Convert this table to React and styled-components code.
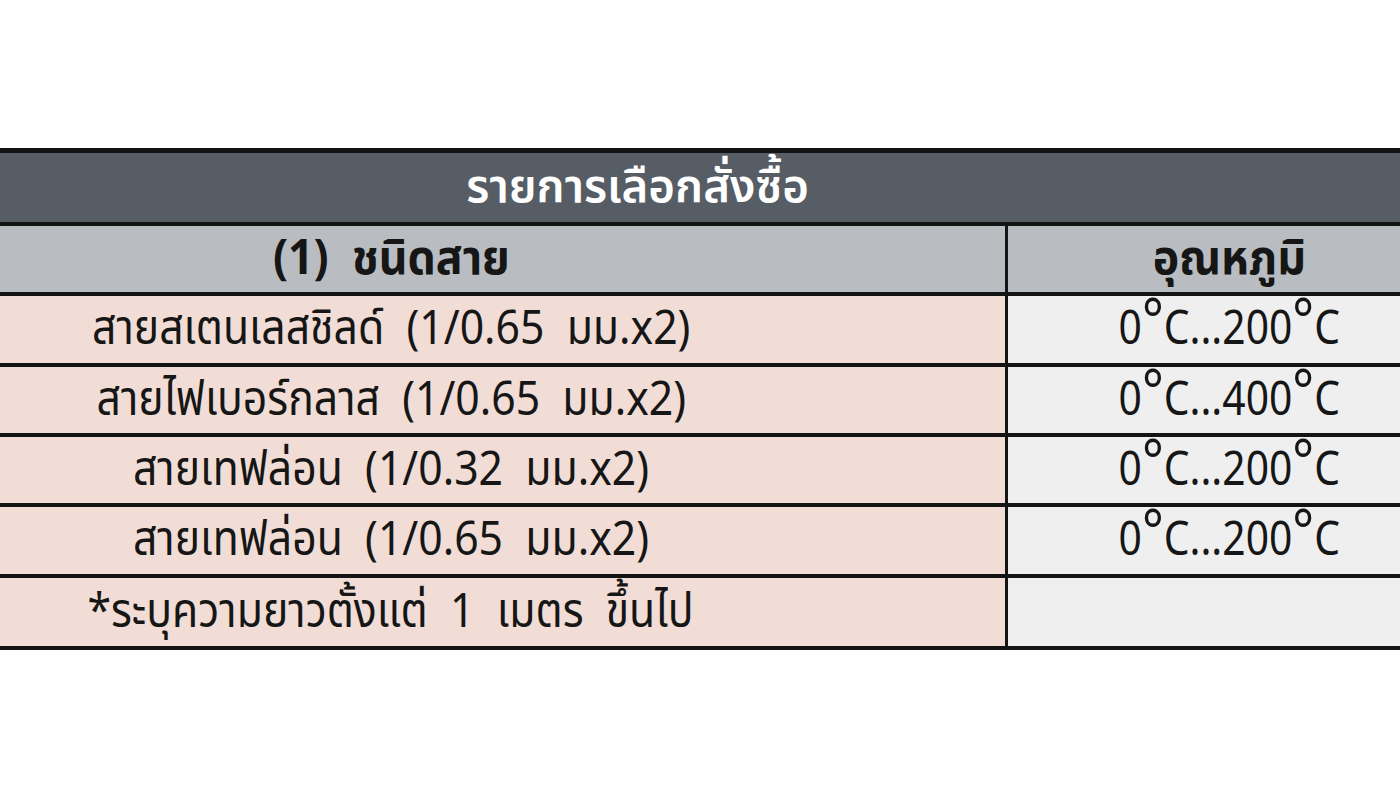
import React from "react";
import styled, { createGlobalStyle } from "styled-components";

const Global = createGlobalStyle`
  html, body { margin: 0; padding: 0; background: #ffffff; }
  body { font-family: "Noto Sans Thai", "Noto Sans", "DejaVu Sans", sans-serif; }
`;

const Page = styled.div`
  width: 1400px;
  height: 800px;
  padding-top: 148px;
  box-sizing: border-box;
  overflow: hidden;
`;

const Table = styled.div`
  display: grid;
  grid-template-columns: 1005px 1fr;
  grid-template-rows: 69px 66px 67px 66px 66px 67px 68px;
  column-gap: 3px;
  row-gap: 4px;
  padding: 5px 0 4px;
  background: #141414;
`;

const Title = styled.div`
  grid-column: 1 / -1;
  background: #565d64;
  display: flex;
  align-items: center;
  justify-content: center;
  padding-right: 124px;
  color: #ffffff;
  font-weight: 600;
  font-size: 47px;
  white-space: nowrap;
`;

const Cell = styled.div`
  display: flex;
  align-items: center;
  justify-content: center;
  background: ${(p) => p.$bg};
  padding: ${(p) => (p.$side === "left" ? "0 223px 0 0" : "0 0 0 50px")};
  color: #161616;
  font-size: 48px;
  font-weight: ${(p) => (p.$head ? 700 : 400)};
  white-space: pre;
`;

const Squeeze = styled.span`
  display: inline-block;
  transform: scaleX(${(p) => p.$sx || 0.89});
`;

const Deg = styled.span`
  font-size: 1.25em;
  line-height: 0;
  vertical-align: 3px;
`;

const rows = [
  ["สายสเตนเลสชิลด์  (1/0.65  มม.x2)", "200"],
  ["สายไฟเบอร์กลาส  (1/0.65  มม.x2)", "400"],
  ["สายเทฟล่อน  (1/0.32  มม.x2)", "200"],
  ["สายเทฟล่อน  (1/0.65  มม.x2)", "200"],
];

const Temp = ({ max }) => (
  <Squeeze $sx={0.85}>
    0<Deg>°</Deg>C...{max}
    <Deg>°</Deg>C
  </Squeeze>
);

export default function App() {
  return (
    <>
      <Global />
      <Page>
        <Table>
          <Title>
            <Squeeze $sx={0.97}>รายการเลือกสั่งซื้อ</Squeeze>
          </Title>
          <Cell $bg="#b9bdc1" $side="left" $head>
            <Squeeze $sx={0.93}>(1)  ชนิดสาย</Squeeze>
          </Cell>
          <Cell $bg="#b9bdc1" $side="right" $head>
            <Squeeze $sx={0.93}>อุณหภูมิ</Squeeze>
          </Cell>
          {rows.map(([name, max]) => (
            <React.Fragment key={name}>
              <Cell $bg="#f1ddd5" $side="left">
                <Squeeze>{name}</Squeeze>
              </Cell>
              <Cell $bg="#eeefee" $side="right">
                <Temp max={max} />
              </Cell>
            </React.Fragment>
          ))}
          <Cell $bg="#f1ddd5" $side="left">
            <Squeeze>*ระบุความยาวตั้งแต่  1  เมตร  ขึ้นไป</Squeeze>
          </Cell>
          <Cell $bg="#eeefee" $side="right" />
        </Table>
      </Page>
    </>
  );
}
